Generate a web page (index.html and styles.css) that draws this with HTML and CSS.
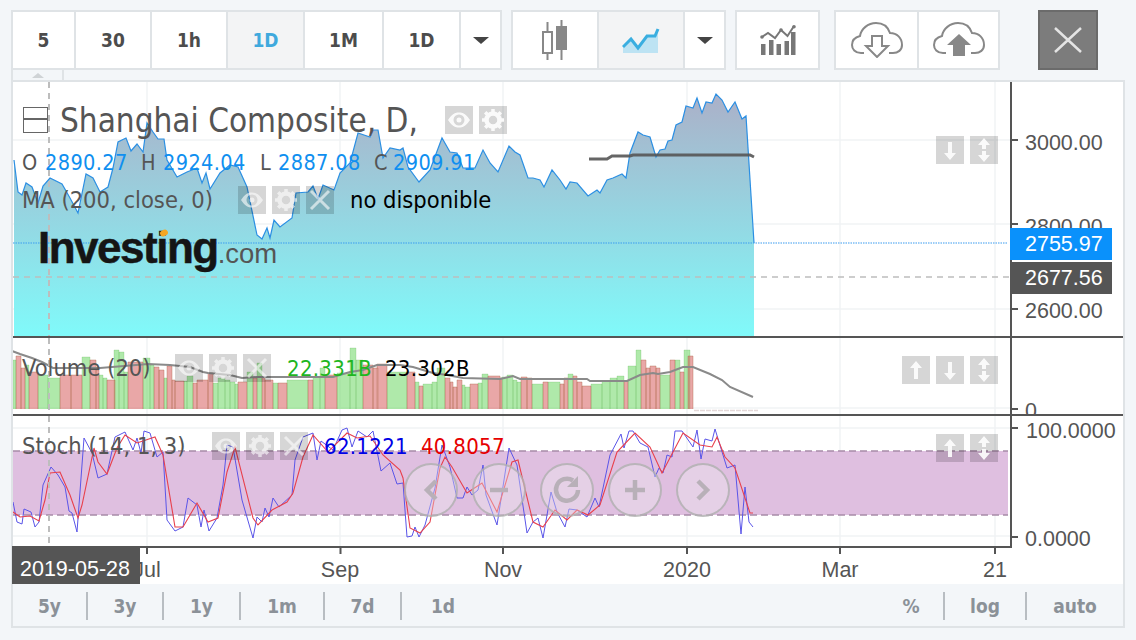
FILE: index.html
```html
<!DOCTYPE html>
<html lang="es">
<head>
<meta charset="utf-8">
<title>Shanghai Composite</title>
<link rel="stylesheet" href="styles.css">
</head>
<body>
<svg class="defs" width="0" height="0" aria-hidden="true">
  <defs>
    <symbol id="i-eye" viewBox="0 0 28 28"><path fill-rule="evenodd" d="M3 14C7 8 10 6.500 14 6.500S21 8 25 14C21 20 18 21.500 14 21.500S7 20 3 14ZM19.500 14A5.500 5.500 0 1 0 8.500 14A5.500 5.500 0 1 0 19.500 14ZM16.500 14A2.500 2.500 0 1 1 11.500 14A2.500 2.500 0 1 1 16.500 14Z" fill="#fff"/></symbol>
    <symbol id="i-gear" viewBox="0 0 28 28"><circle cx="14" cy="14" r="6.500" fill="none" stroke="#fff" stroke-width="4.500"/><path d="M14 3V8M14 20V25M3 14H8M20 14H25M6.200 6.200L9.700 9.700M18.300 18.300L21.800 21.800M21.800 6.200L18.300 9.700M9.700 18.300L6.200 21.800" stroke="#fff" stroke-width="3.500"/></symbol>
    <symbol id="i-x" viewBox="0 0 28 28"><path d="M5 5L23 23M23 5L5 23" stroke="#fff" stroke-width="3"/></symbol>
    <symbol id="i-up" viewBox="0 0 28 28"><path d="M14 5L20 12H16V23H12V12H8Z" fill="#fff"/></symbol>
    <symbol id="i-down" viewBox="0 0 28 28"><path d="M14 24L20 17H16V6H12V17H8Z" fill="#fff"/></symbol>
    <symbol id="i-updown" viewBox="0 0 28 28"><path d="M14 2L20 9H16V13H12V9H8ZM14 26L20 19H16V15H12V19H8Z" fill="#fff"/></symbol>
    <symbol id="i-cloud" viewBox="0 0 52 36"><path d="M13 31H10C4 31 1 27 1 23C1 18 5 15 9 14C10 7 17 1 25 1C32 1 37 5 39 11C46 11 51 16 51 23C51 28 47 31 42 31H38" fill="none" stroke="#888" stroke-width="2"/></symbol>
  </defs>
</svg>

<header class="toolbar">
  <div class="group">
    <button class="btn w63">5</button>
    <button class="btn w76">30</button>
    <button class="btn w76">1h</button>
    <button class="btn w77 on">1D</button>
    <button class="btn w79">1M</button>
    <button class="btn w77">1D</button>
    <button class="btn fill"><span class="caret"></span></button>
  </div>
  <div class="group g2">
    <button class="btn w86">
      <svg width="28" height="40" viewBox="0 0 28 40"><path d="M6.500 2V12M6.500 33V40M20.500 0V6M20.500 30V40" stroke="#888" stroke-width="2"/><rect x="2" y="12" width="9" height="21" fill="#fff" stroke="#888" stroke-width="2"/><rect x="15" y="6" width="11" height="24" fill="#888"/></svg>
    </button>
    <button class="btn w86 on">
      <svg width="38" height="27" viewBox="0 0 38 27"><path d="M1 20L9 12L16 21L25 9H33L36 2V26H1Z" fill="#bde3f3"/><path d="M1 20L9 12L16 21L25 9H33L36 2" fill="none" stroke="#3aaee0" stroke-width="3"/></svg>
    </button>
    <button class="btn fill"><span class="caret"></span></button>
  </div>
  <div class="group g3">
    <button class="btn fill">
      <svg width="36" height="30" viewBox="0 0 36 30"><path d="M1 19h4.500v11H1zM9 15h4.500v15H9zM16.500 19H21v11h-4.500zM24.500 16H29v14h-4.500zM31 7h4.500v23H31z" fill="#777"/><path d="M2 12L8 8L15 13L21 5L27.500 11L34 1" fill="none" stroke="#777" stroke-width="2"/><circle cx="2" cy="12" r="1.800" fill="#777"/><circle cx="21" cy="5" r="1.800" fill="#777"/><circle cx="34" cy="1.800" r="1.800" fill="#777"/></svg>
    </button>
  </div>
  <div class="group g4">
    <button class="btn w83">
      <svg width="52" height="36" viewBox="0 0 52 36"><use href="#i-cloud"/><path d="M21 14H31V24H37L26 35L15 24H21Z" fill="#fff" stroke="#888" stroke-width="2"/></svg>
    </button>
    <button class="btn fill">
      <svg width="52" height="36" viewBox="0 0 52 36"><use href="#i-cloud"/><path d="M26 12L38 23H32V34H20V23H14Z" fill="#888"/></svg>
    </button>
  </div>
  <button class="close" aria-label="Cerrar">
    <svg width="28" height="26" viewBox="0 0 28 26"><path d="M1 1L27 25M27 1L1 25" stroke="#e4e4e4" stroke-width="2.500"/></svg>
  </button>
</header>

<div class="tab"><span class="tab-up"></span></div>

<main class="chart">
  <section class="pane main-pane">
    <svg class="plot" width="997" height="254" viewBox="13 82 997 254">
      <defs>
        <linearGradient id="area" gradientUnits="userSpaceOnUse" x1="0" y1="94" x2="0" y2="336">
          <stop offset="0" stop-color="#abb0c8"/>
          <stop offset="1" stop-color="#80fafa"/>
        </linearGradient>
      </defs>
      <path class="grid" d="M147 82V336M340 82V336M503 82V336M687 82V336M840 82V336M995 82V336M13 140H1010M13 224H1010M13 309H1010"/>
      <path fill="url(#area)" d="M14 160L18 192L22 195L26 183L32 187L38 203L43 186L50 178L62 184L70 198L78 213L86 174L93 178L100 192L108 187L113 168L118 142L126 138L131 151L137 144L143 152L147 123L153 132L158 139L164 139L167 160L177 177L187 172L197 168L202 183L206 173L210 189L220 173L230 165L238 167L247 187L257 235L262 239L267 228L270 238L274 220L280 227L292 218L296 193L308 192L313 186L318 199L323 185L334 190L340 173L350 163L358 133L370 137L373 130L378 130L383 158L390 148L400 150L403 148L408 167L419 182L430 170L442 138L450 152L457 153L463 168L475 168L483 150L490 163L498 172L509 146L515 152L520 155L528 178L533 178L540 180L544 187L552 170L560 180L566 189L570 182L577 183L588 196L597 190L600 193L607 180L613 178L622 174L626 178L630 153L638 132L643 135L650 137L656 157L660 150L665 149L668 141L672 140L676 125L682 122L686 106L693 108L697 98L702 113L706 102L712 103L716 94L722 100L728 112L735 102L742 119L746 116L754 243V336H14Z"/>
      <path class="price" d="M14 160L18 192L22 195L26 183L32 187L38 203L43 186L50 178L62 184L70 198L78 213L86 174L93 178L100 192L108 187L113 168L118 142L126 138L131 151L137 144L143 152L147 123L153 132L158 139L164 139L167 160L177 177L187 172L197 168L202 183L206 173L210 189L220 173L230 165L238 167L247 187L257 235L262 239L267 228L270 238L274 220L280 227L292 218L296 193L308 192L313 186L318 199L323 185L334 190L340 173L350 163L358 133L370 137L373 130L378 130L383 158L390 148L400 150L403 148L408 167L419 182L430 170L442 138L450 152L457 153L463 168L475 168L483 150L490 163L498 172L509 146L515 152L520 155L528 178L533 178L540 180L544 187L552 170L560 180L566 189L570 182L577 183L588 196L597 190L600 193L607 180L613 178L622 174L626 178L630 153L638 132L643 135L650 137L656 157L660 150L665 149L668 141L672 140L676 125L682 122L686 106L693 108L697 98L702 113L706 102L712 103L716 94L722 100L728 112L735 102L742 119L746 116L754 243"/>
      <path class="ma" d="M589 159H607L612 156H630L633 155H750L754 157"/>
      <path class="dot-blue" d="M13 243H1008"/>
      <path class="dash-h" d="M13 277H1010"/>
      <path class="cross" d="M49 82V336"/>
    </svg>
    <div class="axis">
      <svg width="111" height="254" viewBox="1012 82 111 254">
        <path class="tick" d="M1012 140H1018M1012 224H1018M1012 309H1018"/>
        <text class="ax" x="1025" y="150">3000.00</text>
        <text class="ax" x="1025" y="234">2800.00</text>
        <text class="ax" x="1025" y="318">2600.00</text>
      </svg>
    </div>
    <div class="tag tag-blue">2755.97</div>
    <div class="tag tag-dark">2677.56</div>
    <div class="legend legend-main">
      <div class="title-row">
        <span class="collapse"></span>
        <span class="title">Shanghai Composite, D,</span>
        <span class="sq ml27"><svg><use href="#i-eye"/></svg></span>
        <span class="sq"><svg><use href="#i-gear"/></svg></span>
      </div>
      <div class="ohlc">
        <span class="k">O</span><span class="v">2890.27</span>
        <span class="k">H</span><span class="v">2924.04</span>
        <span class="k">L</span><span class="v">2887.08</span>
        <span class="k">C</span><span class="v">2909.91</span>
      </div>
      <div class="ind ma-row">
        <span class="ind-name w216">MA (200, close, 0)</span>
        <span class="sq"><svg><use href="#i-eye"/></svg></span>
        <span class="sq"><svg><use href="#i-gear"/></svg></span>
        <span class="sq"><svg><use href="#i-x"/></svg></span>
        <span class="no-data">no disponible</span>
      </div>
    </div>
    <div class="logo"><span class="logo-main">Investing</span><span class="logo-com">.com</span><i class="logo-dot"></i></div>
    <div class="side side-main">
      <span class="sq"><svg><use href="#i-down"/></svg></span>
      <span class="sq"><svg><use href="#i-updown"/></svg></span>
    </div>
  </section>

  <section class="pane vol-pane">
    <svg class="plot" width="997" height="76" viewBox="13 338 997 76">
      <path class="grid" d="M147 338V414M340 338V414M503 338V414M687 338V414M840 338V414M995 338V414M13 408H1010"/>
      <path class="bar-g" d="M13 409V360H16V409M25 409V365H29V409M38 409V375H48V409M48 409V378H60V409M82 409V357H90V409M99 409V375H103V409M103 409V378H107V409M114 409V350H119V409M119 409V352H124V409M124 409V372H128V409M143 409V358H150V409M150 409V365H154V409M164 409V378H167V409M184 409V381H187V409M187 409V376H193V409M213 409V383H218V409M218 409V378H225V409M225 409V380H230V409M230 409V382H235V409M235 409V384H238V409M247 409V372H253V409M257 409V363H262V409M273 409V383H278V409M287 409V380H308V409M313 409V377H320V409M320 409V368H325V409M337 409V373H350V409M350 409V348H356V409M356 409V360H363V409M387 409V372H407V409M415 409V382H419V409M423 409V384H432V409M432 409V382H437V409M437 409V368H445V409M462 409V385H465V409M465 409V387H470V409M478 409V383H482V409M482 409V374H488V409M502 409V377H507V409M507 409V375H513V409M513 409V380H517V409M517 409V382H521V409M532 409V384H543V409M548 409V382H560V409M568 409V374H573V409M591 409V384H602V409M602 409V381H610V409M610 409V378H617V409M617 409V376H624V409M628 409V366H636V409M636 409V350H641V409M660 409V375H670V409M675 409V360H680V409M684 409V350H690V409"/>
      <path class="bar-r" d="M16 409V356H21V409M21 409V368H25V409M29 409V372H38V409M60 409V375H71V409M71 409V375H82V409M90 409V360H96V409M96 409V370H99V409M107 409V380H115V409M128 409V362H143V409M154 409V367H159V409M159 409V370H164V409M167 409V366H172V409M172 409V380H175V409M175 409V381H184V409M193 409V383H197V409M197 409V380H208V409M208 409V373H213V409M238 409V382H247V409M253 409V378H257V409M262 409V377H265V409M265 409V380H273V409M278 409V383H287V409M308 409V380H313V409M325 409V375H337V409M363 409V365H373V409M373 409V368H378V409M377 409V364H387V409M407 409V372H415V409M419 409V386H423V409M445 409V378H450V409M450 409V382H453V409M453 409V387H457V409M457 409V380H462V409M470 409V384H478V409M488 409V376H500V409M500 409V378H502V409M521 409V377H527V409M527 409V378H532V409M543 409V382H548V409M560 409V384H564V409M564 409V378H568V409M573 409V376H577V409M577 409V382H582V409M582 409V386H591V409M624 409V381H628V409M641 409V360H646V409M646 409V368H650V409M650 409V366H656V409M656 409V368H660V409M670 409V360H675V409M680 409V372H684V409M688 409V356H693V409"/>
      <path class="vol-ma" d="M12 351L20 354L32 358L42 362L53 368H100L148 364L170 365L190 367L203 372L208 373L230 375L242 378L257 377L267 377H333L350 372L363 370L377 365L400 365L413 367L433 373L447 375L463 378L500 379L513 376L520 379H587L590 381H627L640 375L653 373L658 374L670 372L683 367H693L710 374L722 380L730 387L753 397"/>
      <path class="faint" d="M694 410.500H758"/>
      <path class="cross" d="M49 338V414"/>
    </svg>
    <div class="axis">
      <svg width="111" height="76" viewBox="1012 338 111 76">
        <path class="tick" d="M1012 409H1018"/>
        <text class="ax" x="1025" y="418">0</text>
      </svg>
    </div>
    <div class="legend legend-vol">
      <div class="ind">
        <span class="ind-name w153">Volume (20)</span>
        <span class="sq"><svg><use href="#i-eye"/></svg></span>
        <span class="sq"><svg><use href="#i-gear"/></svg></span>
        <span class="sq"><svg><use href="#i-x"/></svg></span>
        <span class="val green ml10">22.331B</span>
        <span class="val black ml13">23.302B</span>
      </div>
    </div>
    <div class="side side-vol">
      <span class="sq"><svg><use href="#i-up"/></svg></span>
      <span class="sq"><svg><use href="#i-down"/></svg></span>
      <span class="sq"><svg><use href="#i-updown"/></svg></span>
    </div>
  </section>

  <section class="pane stoch-pane">
    <svg class="plot" width="997" height="130" viewBox="13 416 997 130">
      <path class="grid" d="M147 416V546M340 416V546M503 416V546M687 416V546M840 416V546M995 416V546M13 428H1010M13 536H1010"/>
      <rect class="band" x="13" y="451" width="995" height="64"/>
      <path class="band-edge" d="M13 451H1008M13 515H1008"/>
      <path class="st-blue" d="M13 502L17 522L22 524L24 509L31 512L35 527L39 522L43 485L51 467L58 475L65 487L69 511L72 513L77 532L84 438L92 453L98 478L107 474L115 437L125 432L133 450L137 438L141 453L144 431L150 433L157 457L163 452L167 520L175 531L183 527L188 498L197 505L201 527L204 510L209 531L217 518L223 485L227 445L233 447L242 500L253 538L257 517L262 522L265 508L269 517L273 498L279 507L292 495L295 460L303 437L313 433L317 460L321 441L333 450L342 430L347 428L352 447L358 431L367 437L373 431L381 471L390 463L397 484L403 483L407 537L412 536L415 527L419 537L425 525L435 488L442 445L450 467L457 498L463 498L467 487L472 495L478 490L483 465L486 495L497 525L509 448L517 465L527 533L533 522L538 518L543 538L551 492L557 512L565 527L569 509L577 510L587 517L595 498L599 507L610 455L621 434L624 448L629 431L633 431L640 443L648 447L655 477L659 468L663 473L667 455L672 457L675 431L682 431L693 447L697 430L701 459L705 439L712 441L715 429L727 468L735 465L741 534L745 487L749 522L753 527"/>
      <path class="st-red" d="M13 512L20 517L30 516L39 521L45 500L50 473L60 472L70 495L78 518L82 505L94 448L98 462L107 474L117 448L125 435L137 443L155 437L163 455L175 527L183 527L197 503L208 522L218 518L227 472L235 447L253 518L258 525L272 510L287 502L293 493L303 457L313 435L328 452L347 433L357 438L370 436L383 455L400 470L403 478L410 528L420 533L430 522L440 468L445 457L452 467L467 493L482 483L497 512L512 462L518 460L533 522L543 527L555 510L567 520L577 510L588 515L600 505L617 452L635 433L650 447L662 473L683 433L700 445L712 447L717 437L725 457L735 468L750 513L753 513"/>
      <path class="cross" d="M49 416V546"/>
    </svg>
    <div class="axis">
      <svg width="111" height="130" viewBox="1012 416 111 130">
        <path class="tick" d="M1012 428H1018M1012 537H1018"/>
        <text class="ax" x="1026" y="438">100.0000</text>
        <text class="ax" x="1025" y="546">0.0000</text>
      </svg>
    </div>
    <div class="legend legend-st">
      <div class="ind">
        <span class="ind-name w190">Stoch (14, 1, 3)</span>
        <span class="sq"><svg><use href="#i-eye"/></svg></span>
        <span class="sq"><svg><use href="#i-gear"/></svg></span>
        <span class="sq"><svg><use href="#i-x"/></svg></span>
        <span class="val blue ml10">62.1221</span>
        <span class="val red ml13">40.8057</span>
      </div>
    </div>
    <div class="side side-st">
      <span class="sq"><svg><use href="#i-up"/></svg></span>
      <span class="sq"><svg><use href="#i-updown"/></svg></span>
    </div>
    <div class="navs">
      <span class="nav"><svg width="54" height="54" viewBox="0 0 54 54"><path d="M32 18L23 27L32 36"/></svg></span>
      <span class="nav"><svg width="54" height="54" viewBox="0 0 54 54"><path d="M18 27H36"/></svg></span>
      <span class="nav"><svg width="54" height="54" viewBox="0 0 54 54"><path d="M38 27A11 11 0 1 1 33 17.500"/><path class="nav-fill" d="M38 13V24H27Z"/></svg></span>
      <span class="nav"><svg width="54" height="54" viewBox="0 0 54 54"><path d="M17 27H37M27 17V37"/></svg></span>
      <span class="nav"><svg width="54" height="54" viewBox="0 0 54 54"><path d="M22 18L31 27L22 36"/></svg></span>
    </div>
  </section>

  <section class="time-axis">
    <svg width="1110" height="36" viewBox="13 548 1110 36">
      <path class="tick" d="M147 548V554M340.500 548V554M503 548V554M687 548V554M840 548V554M995 548V554"/>
      <text class="ax mid" x="147" y="577">Jul</text>
      <text class="ax mid" x="340" y="577">Sep</text>
      <text class="ax mid" x="503" y="577">Nov</text>
      <text class="ax mid" x="687" y="577">2020</text>
      <text class="ax mid" x="840" y="577">Mar</text>
      <text class="ax mid" x="995" y="577">21</text>
    </svg>
    <div class="date-tag">2019-05-28</div>
  </section>

  <footer class="ranges">
    <span class="rg w75">5y</span>
    <span class="rg w76">3y</span>
    <span class="rg w77">1y</span>
    <span class="rg w84">1m</span>
    <span class="rg w77">7d</span>
    <span class="rg w82 plain">1d</span>
    <span class="rg w66 push">%</span>
    <span class="rg w82">log</span>
    <span class="rg w96 plain">auto</span>
  </footer>
</main>
</body>
</html>
```

FILE: styles.css
```css
* { box-sizing: border-box; }
html, body { margin: 0; padding: 0; }
body {
  width: 1136px;
  height: 640px;
  overflow: hidden;
  background: #f3f6f9;
  padding: 10px 0 0 11px;
  font-family: "DejaVu Sans Condensed", "DejaVu Sans", sans-serif;
  color: #555;
}
.defs { position: absolute; }

/* toolbar */
.toolbar { display: flex; height: 60px; }
.group {
  display: flex;
  border: 2px solid #dfe3e6;
  background: #fff;
}
.group:first-child { width: 491px; }
.g2 { width: 215px; margin-left: 9px; }
.g3 { width: 85px; margin-left: 9px; }
.g4 { width: 166px; margin-left: 14px; }
.btn {
  display: flex;
  align-items: center;
  justify-content: center;
  height: 100%;
  padding: 0;
  border: 0;
  border-right: 2px solid #dfe3e6;
  background: #fff;
  font: 700 19px "DejaVu Sans Condensed", "DejaVu Sans", sans-serif;
  color: #4c4c4c;
}
.btn:last-child { border-right: 0; }
.btn.on { background: #f3f4f5; color: #3fa9dd; }
.btn.fill { flex: 1; }
.w63 { width: 63px; }
.w76 { width: 76px; }
.w77 { width: 77px; }
.w79 { width: 79px; }
.w83 { width: 83px; }
.w86 { width: 86px; }
.caret {
  width: 0;
  height: 0;
  border-left: 8px solid transparent;
  border-right: 8px solid transparent;
  border-top: 7px solid #444;
}
.close {
  display: flex;
  align-items: center;
  justify-content: center;
  width: 60px;
  height: 60px;
  margin-left: 38px;
  padding: 0;
  border: 2px solid #6b6b6b;
  background: #7c7c7c;
}

/* small tab above chart */
.tab {
  display: flex;
  justify-content: center;
  width: 53px;
  height: 10px;
  padding-top: 3px;
  border: 2px solid #dfe3e6;
  border-width: 0 2px;
}
.tab-up {
  width: 0;
  height: 0;
  border-left: 6px solid transparent;
  border-right: 6px solid transparent;
  border-bottom: 5px solid #cfd3d6;
}

/* chart frame */
.chart {
  width: 1114px;
  height: 548px;
  border: 2px solid #dfe3e6;
  background: #fff;
}
.pane {
  position: relative;
  display: flex;
  border-bottom: 2px solid #555;
}
.main-pane { height: 256px; }
.vol-pane { height: 78px; }
.stoch-pane { height: 132px; border-bottom: 0; }
.stoch-pane .plot { border-bottom: 2px solid #555; height: 132px; }
.plot { display: block; flex: none; }
.axis {
  flex: 1;
  border-left: 2px solid #555;
  overflow: hidden;
}
.axis svg, .time-axis svg { display: block; }
.grid { stroke: #f1f3f5; stroke-width: 1.500; fill: none; }
.price { fill: none; stroke: #2b8fe3; stroke-width: 1.200; }
.ma { fill: none; stroke: #555; stroke-width: 3; stroke-opacity: .9; }
.dot-blue { stroke: #3a9cf0; stroke-width: 1.200; stroke-dasharray: 1.500 1; }
.dash-h { stroke: #bdbdbd; stroke-width: 1.500; stroke-dasharray: 6 5; }
.cross { stroke: #bdbdbd; stroke-width: 2; stroke-dasharray: 6 5; }
.tick { stroke: #555; stroke-width: 2; fill: none; }
.ax {
  font-family: "Liberation Sans", Arial, sans-serif;
  font-size: 21.500px;
  fill: #555;
}
.mid { text-anchor: middle; }

.bar-g { fill: rgba(110, 215, 100, .55); stroke: rgba(80, 170, 70, .3); stroke-width: .7; }
.bar-r { fill: rgba(215, 95, 95, .55); stroke: rgba(170, 100, 70, .55); stroke-width: .7; }
.vol-ma { fill: none; stroke: #8a8a8a; stroke-width: 2; }
.faint { stroke: #e4d8d8; stroke-width: 1.500; stroke-dasharray: 5 1; }
.band { fill: #dfbfe0; }
.band-edge { stroke: #a88ca8; stroke-width: 1.500; stroke-dasharray: 7 4; fill: none; }
.st-blue { fill: none; stroke: #5a55e8; stroke-width: 1; }
.st-red { fill: none; stroke: #e8404c; stroke-width: 1.100; }

/* price tags */
.tag {
  position: absolute;
  left: 997px;
  width: 102px;
  height: 32px;
  padding-left: 15px;
  font: 21.500px/32px "Liberation Sans", Arial, sans-serif;
  color: #fff;
}
.tag-blue { top: 146px; background: #0a91fb; }
.tag-dark { top: 180px; background: #555; }

/* legends */
.legend { position: absolute; left: 9px; }
.legend-main { top: 24px; }
.legend-vol { top: 16px; }
.legend-st { top: 16px; }
.title-row { display: flex; align-items: center; height: 28px; }
.collapse {
  position: relative;
  width: 25px;
  height: 26px;
  margin: 0 12px 0 1px;
  border: 1.500px solid #666;
}
.collapse::after {
  content: "";
  position: absolute;
  left: 0;
  right: 0;
  top: 10px;
  height: 1.500px;
  background: #666;
}
.title { padding-top: 2px; font-size: 33px; line-height: 28px; white-space: nowrap; color: #555; }
.sq {
  display: block;
  flex: none;
  width: 28px;
  height: 28px;
  margin-right: 6px;
  background: rgba(0, 0, 0, .16);
}
.sq svg { display: block; width: 28px; height: 28px; opacity: .9; }
.ind .sq svg { opacity: .6; }
.ml27 { margin-left: 27px; }
.ohlc {
  display: grid;
  grid-template-columns: 23px 96px 22px 97px 18px 96px 19px auto;
  align-items: center;
  height: 28px;
  margin-top: 14px;
  font-size: 21.500px;
  white-space: nowrap;
}
.k { color: #555; }
.v { color: #0f8ff0; letter-spacing: .4px; }
.ind { display: flex; align-items: center; height: 28px; white-space: nowrap; font-size: 23.500px; }
.ma-row { margin-top: 10px; }
.ind-name { color: #555; }
.w216 { width: 216px; }
.w153 { width: 153px; }
.w190 { width: 190px; }
.val { font-size: 22px; letter-spacing: .3px; }
.no-data { margin-left: 10px; color: #000; }
.black { color: #000; }
.green { color: #1fb61f; }
.blue { color: #0000e6; }
.red { color: #e60000; }
.ml10 { margin-left: 10px; }
.ml13 { margin-left: 13px; }

/* logo */
.logo { position: absolute; left: 25px; top: 142px; white-space: nowrap; font-family: "Liberation Sans", Arial, sans-serif; }
.logo-main { font-weight: 700; font-size: 44px; line-height: 48px; letter-spacing: -1.500px; color: #151515; -webkit-text-stroke: .5px #151515; }
.logo-com { font-size: 27.500px; color: #555; }
.logo-dot {
  position: absolute;
  left: 122px;
  top: 6px;
  width: 8px;
  height: 6px;
  border-radius: 3px;
  background: #f5a623;
  transform: rotate(-25deg);
}

/* right buttons */
.side { position: absolute; right: 125px; display: flex; }
.side .sq:last-child { margin-right: 0; }
.side-main { top: 54px; }
.side-vol { top: 18px; }
.side-st { top: 18px; }

/* nav buttons */
.navs { position: absolute; left: 391px; top: 47px; display: flex; gap: 14px; }
.nav {
  display: block;
  width: 54px;
  height: 54px;
  border: 2.500px solid rgba(170, 170, 170, .75);
  border-radius: 50%;
  background: rgba(240, 240, 240, .35);
}
.nav svg { display: block; margin: -2.500px; }
.nav path { fill: none; stroke: #b8b0b8; stroke-width: 4.500; }
.nav .nav-fill { fill: #b8b0b8; stroke: none; }

/* time axis */
.time-axis { position: relative; height: 36px; overflow: visible; }
.date-tag {
  position: absolute;
  left: -1px;
  top: -2px;
  width: 128px;
  height: 38px;
  padding-left: 8px;
  font: 21.500px/46px "Liberation Sans", Arial, sans-serif;
  color: #fff;
  background: #555;
}

/* footer */
.ranges {
  display: flex;
  height: 42px;
  padding-top: 8px;
  background: #f3f6f9;
}
.rg {
  display: block;
  height: 28px;
  border-right: 2px solid #b8bdc2;
  text-align: center;
  font-weight: 700;
  font-size: 19px;
  line-height: 28px;
  color: #8b9198;
}
.rg.plain { border-right: 0; }
.push { margin-left: auto; }
.w75 { width: 75px; }
.w84 { width: 84px; }
.w82 { width: 82px; }
.w66 { width: 66px; }
.w96 { width: 96px; }
```
